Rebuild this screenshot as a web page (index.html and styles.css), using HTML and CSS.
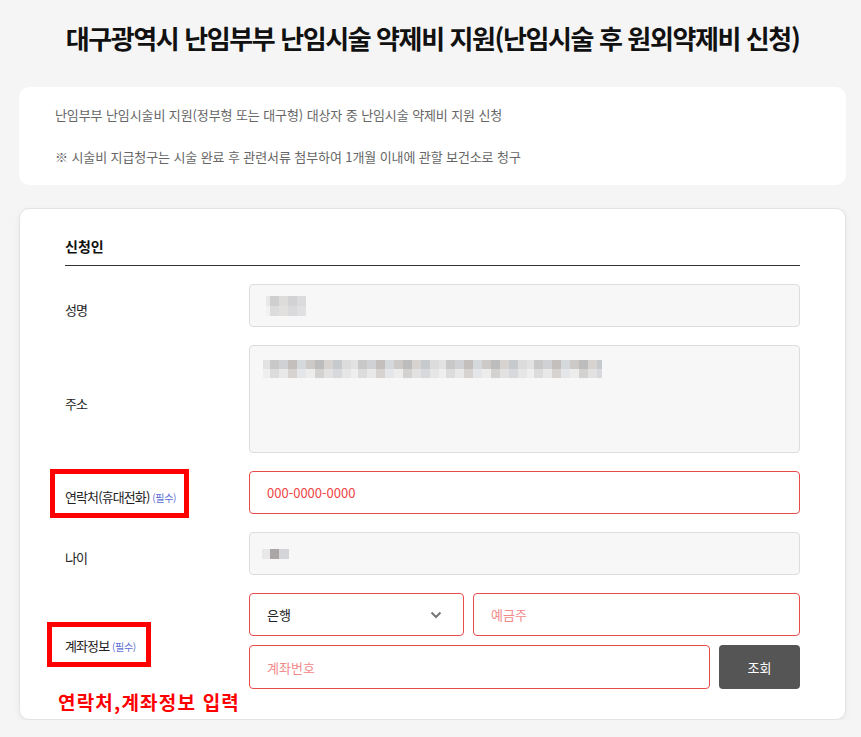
FILE: index.html
```html
<!DOCTYPE html>
<html lang="ko">
<head>
    <meta charset="UTF-8">
    <meta name="viewport" content="width=device-width, initial-scale=1.0">
    <title>대구광역시 난임부부 난임시술 약제비 지원</title>
    <link rel="stylesheet" href="styles.css">
</head>
<body>
    <div class="page">
        <h1 class="page-title">대구광역시 난임부부 난임시술 약제비 지원(난임시술 후 원외약제비 신청)</h1>

        <div class="notice">
            <p>난임부부 난임시술비 지원(정부형 또는 대구형) 대상자 중 난임시술 약제비 지원 신청</p>
            <p>※ 시술비 지급청구는 시술 완료 후 관련서류 첨부하여 1개월 이내에 관할 보건소로 청구</p>
        </div>

        <div class="card">
            <h2 class="section-title">신청인</h2>

            <div class="form">
                <div class="form-row">
                    <div class="label">성명</div>
                    <div class="field readonly">
                        <span class="mosaic mosaic-name"></span>
                    </div>
                </div>

                <div class="form-row">
                    <div class="label">주소</div>
                    <div class="field readonly textarea">
                        <span class="mosaic mosaic-addr"></span>
                    </div>
                </div>

                <div class="form-row">
                    <div class="label">연락처(휴대전화) <span class="req">(필수)</span></div>
                    <input class="field required phone" type="text" placeholder="000-0000-0000">
                </div>

                <div class="form-row">
                    <div class="label">나이</div>
                    <div class="field readonly">
                        <span class="mosaic mosaic-age"></span>
                    </div>
                </div>

                <div class="form-row">
                    <div class="label">계좌정보 <span class="req">(필수)</span></div>
                    <div class="account">
                        <div class="account-line">
                            <div class="field required select">
                                <span>은행</span>
                                <svg class="chevron" width="12" height="8" viewBox="0 0 12 8">
                                    <path d="M1.5 1.5 L6 6 L10.5 1.5" fill="none" stroke="#777" stroke-width="2"/>
                                </svg>
                            </div>
                            <input class="field required holder" type="text" placeholder="예금주">
                        </div>
                        <div class="account-line">
                            <input class="field required number" type="text" placeholder="계좌번호">
                            <button class="btn-check">조회</button>
                        </div>
                    </div>
                </div>
            </div>

            <!-- 캡처용 표시 -->
            <div class="mark mark-phone"></div>
            <div class="mark mark-account"></div>
            <div class="mark-text">연락처,계좌정보 입력</div>
        </div>
    </div>
</body>
</html>
```

FILE: styles.css
```css
* {
    margin: 0;
    padding: 0;
    box-sizing: border-box;
}

body {
    background: #f5f5f5;
    font-family: 'Noto Sans CJK KR', 'Noto Sans', sans-serif;
    color: #222;
}

.page {
    width: 827px;
    margin-left: 19px;
    padding-top: 20px;
}

.page-title {
    font-size: 26px;
    line-height: 35px;
    font-weight: 700;
    text-align: center;
    letter-spacing: -1.4px;
    color: #111;
    margin-bottom: 32px;
}

/* 안내 박스 */
.notice {
    background: #fff;
    border-radius: 10px;
    padding: 18px 36px;
    display: flex;
    flex-direction: column;
    gap: 22px;
}

.notice p {
    font-size: 13px;
    line-height: 20px;
    color: #666;
    letter-spacing: -0.1px;
}

/* 신청 카드 */
.card {
    position: relative;
    margin-top: 23px;
    background: #fff;
    border: 1px solid #e3e3e3;
    border-radius: 10px;
    box-shadow: 0 2px 6px rgba(0, 0, 0, 0.06);
    padding: 27px 45px 30px 45px;
}

.section-title {
    font-size: 14px;
    line-height: 20px;
    font-weight: 700;
    color: #111;
    padding-bottom: 9px;
    border-bottom: 1px solid #333;
    margin-bottom: 18px;
}

.form {
    display: flex;
    flex-direction: column;
    gap: 18px;
}

.form-row {
    display: grid;
    grid-template-columns: 184px 1fr;
    align-items: center;
}

.label {
    font-size: 13px;
    color: #222;
    padding-top: 8px;
    letter-spacing: -0.9px;
}

.req {
    font-size: 10px;
    color: #5b6fd6;
    letter-spacing: -0.3px;
}

.field {
    height: 43px;
    border: 1px solid #ddd;
    border-radius: 4px;
    background: #fff;
    font-family: inherit;
    font-size: 13px;
    padding: 0 17px;
    outline: none;
    width: 100%;
    display: flex;
    align-items: center;
}

.field.readonly {
    background: #f7f7f7;
}

.field.textarea {
    height: 108px;
    align-items: flex-start;
    padding-top: 14px;
}

.field.required {
    border-color: #e94a4a;
}

.field::placeholder {
    color: #f28a8a;
}

.field.phone::placeholder {
    color: #ee4444;
}

.account {
    display: flex;
    flex-direction: column;
    gap: 9px;
}

.account-line {
    display: flex;
    gap: 9px;
}

.select {
    width: 215px;
    flex: none;
    justify-content: space-between;
    color: #222;
}

.chevron {
    margin-right: 4px;
}

.account-line .holder {
    flex: 1;
}

.account-line .number {
    flex: 1;
    height: 44px;
}

.btn-check {
    width: 81px;
    height: 44px;
    flex: none;
    background: #555;
    color: #fff;
    border: none;
    border-radius: 4px;
    font-family: inherit;
    font-size: 13px;
}

/* 개인정보 모자이크 */
.mosaic {
    display: block;
    background-repeat: no-repeat;
    background-size: 100% 50%;
    background-position: top, bottom;
}

.mosaic-name {
    width: 40px;
    height: 20px;
    margin-left: -1px;
    background-image:
        linear-gradient(90deg, #e8e8e8 0 4px, #cfcfcf 4px 13px, #dedcdb 13px 22px, #d2d2d4 22px 31px, #dbdadc 31px 40px),
        linear-gradient(90deg, #f2f2f2 0 4px, #dcdcdc 4px 13px, #e2e0df 13px 22px, #dadadc 22px 31px, #e0e0e2 31px 40px);
}

.mosaic-addr {
    width: 339px;
    height: 18px;
    margin-left: -4px;
    background-image:
        repeating-linear-gradient(90deg, #e2e2e2 0 7px, #c8c8c8 7px 16px, #cfd1d4 16px 25px, #c4bfbc 25px 34px, #d6d9dc 34px 43px, #cdc9c6 43px 52px, #bcbcbc 52px 61px, #d7d3d0 61px 70px, #c7cacd 70px 79px, #dcdcdc 79px 88px),
        repeating-linear-gradient(90deg, #efefef 0 7px, #dcdcdc 7px 16px, #e8e8e8 16px 25px, #d6d3d1 25px 34px, #e4e6e9 34px 43px, #ededed 43px 52px, #d4d2d0 52px 61px, #e2e2e2 61px 70px, #d7d9dc 70px 79px, #e6e6e6 79px 88px);
}

.mosaic-age {
    width: 27px;
    height: 10px;
    margin-left: -5px;
    background-size: 100% 100%;
    background-image: linear-gradient(90deg, #e8e8e8 0 8px, #aaa6a6 8px 17px, #d3d5d9 17px 27px);
}

/* 캡처 강조 표시 */
.mark {
    position: absolute;
    border: 5px solid #ff0000;
}

.mark-phone {
    left: 30px;
    top: 260px;
    width: 139px;
    height: 49px;
}

.mark-account {
    left: 27px;
    top: 413px;
    width: 104px;
    height: 45px;
}

.mark-text {
    position: absolute;
    left: 38px;
    top: 479px;
    font-size: 19px;
    font-weight: 700;
    color: #ff0000;
    letter-spacing: 1.2px;
}
```
